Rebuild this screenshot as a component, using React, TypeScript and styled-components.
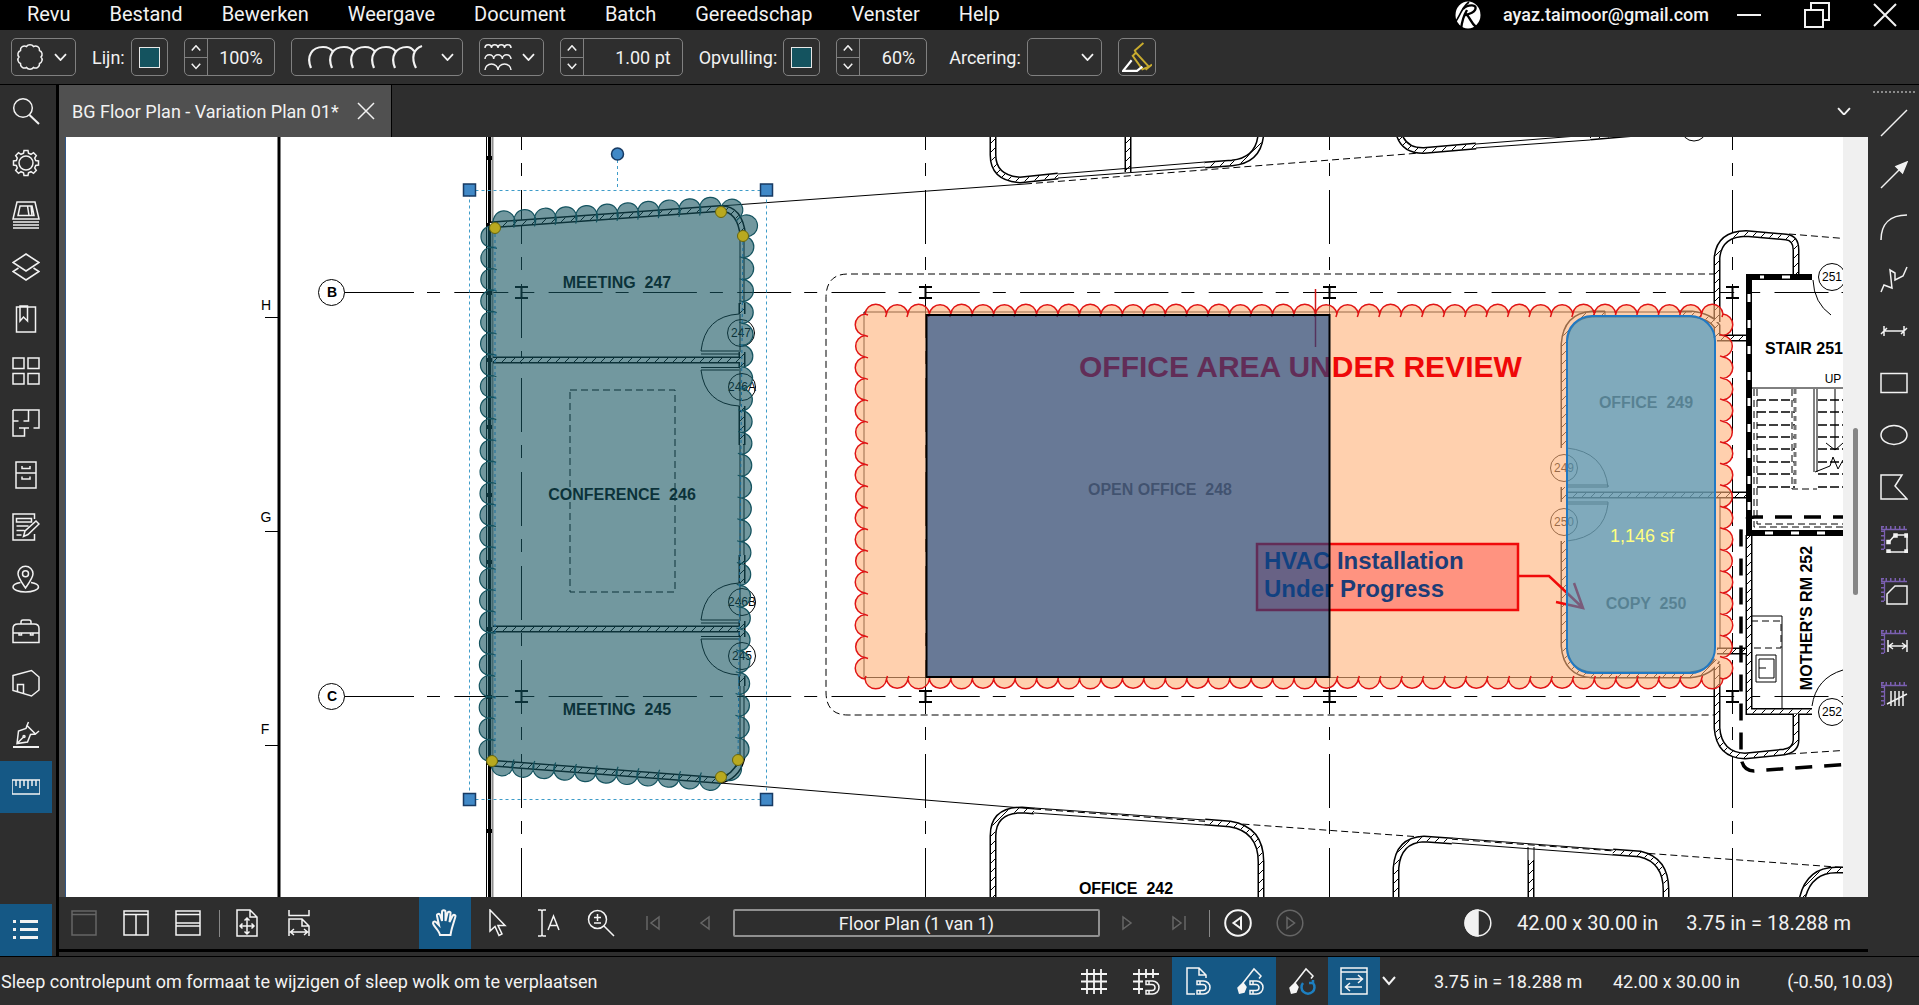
import React from "react";
import styled, { createGlobalStyle } from "styled-components";

const GlobalStyle = createGlobalStyle`
  * { box-sizing: border-box; }
  html, body { margin: 0; padding: 0; }
  body {
    background: #2e2e2e;
    color: #f2f2f2;
    font-family: Roboto, "Liberation Sans", sans-serif;
    font-size: 18px;
    overflow: hidden;
  }
  button, input, select { font: inherit; color: inherit; }
  button { background: none; border: 0; padding: 0; cursor: pointer; }
`;

/* ---------- shell ---------- */

const Shell = styled.div`
  display: flex;
  flex-direction: column;
  height: 100vh;
`;

const MenuBar = styled.header`
  display: flex;
  align-items: center;
  justify-content: space-between;
  height: 30px;
  flex: none;
  background: #000;
`;

const MenuList = styled.nav`
  display: flex;
  padding-left: 8px;
  height: 100%;
`;

const MenuItem = styled.button`
  padding: 0 20px 2px 19px;
  font-size: 20px;
  line-height: 28px;
  white-space: nowrap;
`;

const Account = styled.div`
  display: flex;
  align-items: center;
  height: 100%;
`;

const AccountName = styled.span`
  margin: 0 6px 0 22px;
  font-weight: 500;
  line-height: 28px;
`;

const WindowButton = styled.button`
  display: grid;
  place-items: center;
  width: 68px;
  height: 30px;
`;

const ToolBar = styled.div`
  display: flex;
  align-items: center;
  gap: 16px;
  flex: none;
  height: 55px;
  padding-left: 11px;
  border-bottom: 1px solid #000;
`;

const Field = styled.div<{ $lead?: number }>`
  display: flex;
  align-items: center;
  gap: 6px;
  margin-left: ${(p) => p.$lead ?? 0}px;
`;

const Label = styled.label`
  white-space: nowrap;
`;

const Boxed = styled.button<{ $w: number; $spread?: boolean }>`
  display: flex;
  align-items: center;
  justify-content: ${(p) => (p.$spread ? "space-between" : "center")};
  width: ${(p) => p.$w}px;
  height: 38px;
  padding: ${(p) => (p.$spread ? "0 8px 0 4px" : "0")};
  border: 1px solid #808080;
  border-radius: 5px;
`;

const Swatch = styled.span`
  width: 21px;
  height: 21px;
  background: #14535f;
  border: 1px solid #e8e8e8;
`;

const Spin = styled.div<{ $w: number }>`
  display: flex;
  width: ${(p) => p.$w}px;
  height: 38px;
  border: 1px solid #808080;
  border-radius: 5px;
  overflow: hidden;
`;

const SpinKeys = styled.div`
  display: grid;
  grid-template-rows: 1fr 1fr;
  width: 23px;
  flex: none;
  border-right: 1px solid #808080;

  button { display: grid; place-items: center; }
  button + button { border-top: 1px solid #808080; }
`;

const SpinInput = styled.input`
  flex: 1;
  min-width: 0;
  padding: 0 11px 0 0;
  border: 0;
  background: none;
  text-align: right;
`;

const SelectWrap = styled.div`
  display: grid;
  align-items: center;
  width: 75px;

  select, svg { grid-area: 1 / 1; }
  svg { justify-self: end; margin-right: 8px; pointer-events: none; }
`;

const Select = styled.select`
  width: 100%;
  height: 38px;
  appearance: none;
  background: none;
  border: 1px solid #808080;
  border-radius: 5px;
`;

const Body = styled.div`
  display: flex;
  flex: 1;
  min-height: 0;
`;

const Rail = styled.aside`
  display: flex;
  flex-direction: column;
  width: 59px;
  flex: none;
  border-right: 3px solid #000;
`;

const RailButton = styled.button<{ $on?: boolean; $end?: boolean }>`
  display: grid;
  place-items: center;
  width: 52px;
  height: 52px;
  margin-top: ${(p) => (p.$end ? "auto" : "0")};
  background: ${(p) => (p.$on ? "#155885" : "none")};
`;

const Center = styled.main`
  display: flex;
  flex-direction: column;
  flex: 1;
  min-width: 0;
`;

const TabRow = styled.div`
  display: flex;
  align-items: center;
  justify-content: space-between;
  flex: none;
  height: 52px;
  padding-right: 17px;
`;

const Tab = styled.div`
  display: flex;
  align-items: center;
  gap: 18px;
  height: 100%;
  padding: 0 16px 0 13px;
  background: #505050;
  border-right: 1px solid #000;
  white-space: nowrap;
`;

const IconButton = styled.button`
  display: grid;
  place-items: center;
`;

const Viewport = styled.section`
  display: flex;
  flex: 1;
  min-height: 0;
  border-left: 6px solid #505050;
  background: #fff;
`;

const Sheet = styled.div`
  flex: 1;
  min-width: 0;
  border-left: 1px solid #2f5688;
`;

const ScrollTrack = styled.div`
  display: flex;
  justify-content: center;
  flex: none;
  width: 25px;
  background: #f0f0f0;
`;

const ScrollThumb = styled.div`
  width: 5px;
  height: 22%;
  margin-top: 291px;
  border-radius: 3px;
  background: #868686;
`;

const NavBar = styled.div`
  display: flex;
  align-items: center;
  flex: none;
  height: 55px;
  border-bottom: 3px solid #000;
`;

const NavGroup = styled.div<{ $lead?: number }>`
  display: flex;
  align-items: center;
  height: 100%;
  margin-left: ${(p) => p.$lead ?? 0}px;
`;

const ToolButton = styled.button<{ $on?: boolean; $dim?: boolean }>`
  display: grid;
  place-items: center;
  width: 52px;
  height: 100%;
  flex: none;
  background: ${(p) => (p.$on ? "#155885" : "none")};
  color: ${(p) => (p.$dim ? "#666" : "#f5f5f5")};
`;

const Rule = styled.span`
  width: 1px;
  height: 27px;
  margin: 0 2px 0 4px;
  background: #888;
`;

const PageInput = styled.input`
  width: 367px;
  height: 28px;
  margin: 0 1px 0 2px;
  padding: 0;
  border: 2px solid #909090;
  border-radius: 2px;
  background: #2e2e2e;
  text-align: center;
`;

const NavInfo = styled.div`
  display: flex;
  align-items: center;
  gap: 28px;
  margin-left: auto;
  padding-right: 17px;
  font-size: 20px;
  white-space: nowrap;

  svg { margin-right: -3px; }
`;

const SideTools = styled.aside`
  display: flex;
  flex-direction: column;
  align-items: center;
  flex: none;
  width: 51px;
`;

const Grip = styled.span`
  width: 42px;
  height: 12px;
  background: repeating-linear-gradient(90deg, #8a8a8a 0 2px, transparent 2px 4px) 0 6px / 100% 2px no-repeat;
`;

const StatusBar = styled.footer`
  display: flex;
  align-items: center;
  justify-content: space-between;
  flex: none;
  height: 49px;
  border-top: 1px solid #000;
  white-space: nowrap;
`;

const StatusText = styled.span`
  padding-left: 1px;
`;

const StatusGroup = styled.div`
  display: flex;
  align-items: center;
  height: 100%;
`;

const Readouts = styled.div`
  display: flex;
  padding: 0 26px 0 36px;
`;

const Readout = styled.span<{ $w: number; $end?: boolean }>`
  width: ${(p) => p.$w}px;
  text-align: ${(p) => (p.$end ? "right" : "left")};
`;

const BodySpacer = styled.div`
  height: 4px;
  flex: none;
`;

/* ---------- icons ---------- */

const Glyph = styled.svg`
  display: block;
  fill: none;
  stroke: currentColor;
  stroke-width: 1.5;
`;

type IconProps = { size?: number; children: React.ReactNode };

const Icon = ({ size = 28, children }: IconProps) => (
  <Glyph width={size} height={size} viewBox="-1 -1 28 28" aria-hidden="true">
    {children}
  </Glyph>
);

const Chevron = ({ w = 13, up = false, bold = 1.8 }: { w?: number; up?: boolean; bold?: number }) => (
  <Glyph width={w} height={w * 0.62} viewBox="0 0 13 8" strokeWidth={bold} aria-hidden="true">
    <path d={up ? "M1 7 6.5 1 12 7" : "M1 1 6.5 7 12 1"} strokeWidth={bold} />
  </Glyph>
);

const railIcons: { name: string; art: React.ReactNode }[] = [
  { name: "Zoeken", art: <><circle cx="10" cy="10" r="9.3" /><path d="M16.5 17 26 26" strokeWidth="2" /></> },
  {
    name: "Eigenschappen",
    art: (
      <>
        <circle cx="13" cy="13" r="7" />
        <path d="M10.5 3.3 11 .5h4l.5 2.8 2.500 1L20.5 2.7l2.800 2.800L21.700 8l1 2.500 2.800.5v4l-2.800.5-1 2.500 1.600 2.500-2.800 2.800-2.500-1.600-2.500 1-.5 2.800h-4l-.5-2.800-2.500-1-2.500 1.600L2.700 20.500 4.300 18l-1-2.500L.5 15v-4l2.800-.5 1-2.500L2.700 5.500 5.500 2.700 8 4.300z" />
      </>
    ),
  },
  {
    name: "Sets",
    art: <path d="M4 0h18l4 17H0zM7 4h12l2 9.500H5zM14.500 4l1.500 9.500M18 4l1 9.500M0 20h26M0 23h26M0 26h26" />,
  },
  { name: "Lagen", art: <path d="M13 0 26 8.500 13 17 0 8.500zM5.500 14 0 17.500 13 26l13-8.500-5.500-3.500" /> },
  { name: "Bladwijzers", art: <path d="M3.500 1h19v25h-19zM7 0v15l3.500-4 4 4V0z" /> },
  { name: "Miniaturen", art: <path d="M0 0h11v10.500H0zM15 0h11v10.500H15zM0 15.500h11V26H0zM15 15.500h11V26H15z" /> },
  {
    name: "Ruimten",
    art: <path d="M0 0h15.500v11h-5M5.500 11H0V0M15.500 0H26v18h-5.500M0 11v15h11.500v-8M6 18h10" />,
  },
  { name: "Bestandstoegang", art: <path d="M3 0h20v26H3zM3 11h20M9 4v2.500h8V4M9 14.500V17h8v-2.500" /> },
  {
    name: "Formulieren",
    art: <path d="M21.500 5V0H0v26h21.500v-6M3.500 4.500h15V8h-15zM3.500 12h12M3.500 16.500h8M3.500 21h5M10.500 22.500l1.500-5.500L23 7l3 3-11 10.500z" />,
  },
  {
    name: "Locaties",
    art: <><path d="M12.500 22C8 15.500 5 11.500 5 7.800a7.500 7.500 0 0 1 15 0c0 3.700-3 7.700-7.500 14.200z" /><circle cx="12.500" cy="7.800" r="3" /><path d="M7.500 16.500C3 17.300 0 18.800 0 21c0 2.800 5.500 5 12.500 5S25.500 23.800 25.500 21c0-2.200-3-3.700-7.500-4.500" /></>,
  },
  { name: "Gereedschapskist", art: <path d="M0 24.500V10.500Q0 6 5 6h16q5 0 5 4.500v14zM8 6v-2q0-2 2-2h6q2 0 2 2v2M0 15h26M6 15v2h2.500v-2M17.500 15v2H20v-2" /> },
  { name: "Modelstructuur", art: <path d="M0 5.500 18.500.5 26 7v13l-7.500 6L0 20.500zM4.500 21.500v-7h6v8.500" /> },
  {
    name: "Handtekeningen",
    art: <><path d="M15.500 0 14 3.500l8.500 8.500 3.500-3M14 3.500 13 6.500 5.500 9 4 21.500l10.500-1.500 3-7.500 5-.5M4 21.500l6-6" /><circle cx="11" cy="14.500" r="1" /><path d="M0 25h26" strokeWidth="2" /></>,
  },
  { name: "Metingen", art: <path d="M-1 6h28v14H-1zM3 6v6M7 6v8M11 6v6M15 6v9M19 6v6M23 6v6" /> },
];

const measureFrame = (
  <>
    <path d="M0 1.500H26M1.500 0V26" stroke="#7a5fb0" strokeWidth="3" strokeDasharray="1.5 3" />
    <path d="M0 3.500H26M3.500 3V23" stroke="#7a5fb0" strokeWidth="1.3" />
  </>
);

const sideIcons: { name: string; art: React.ReactNode }[] = [
  { name: "Lijn", art: <path d="M0 26 26 0" /> },
  { name: "Pijl", art: <><path d="M0 26 20 6" /><path d="M26 0 21.500 11 15 4.500z" fill="currentColor" /></> },
  { name: "Boog", art: <path d="M0 26C0 10 9 1 26 1" /> },
  { name: "Polylijn", art: <path d="M0 26 3 19 11 22 9 4 14 7 14 14 22 10 26 1" /> },
  { name: "Maatlijn", art: <path d="M3 13h20M3 8v10M23 8v10M0 16l6-6M20 16l6-6" /> },
  { name: "Rechthoek", art: <path d="M0 3.500h26v19H0z" /> },
  { name: "Ellips", art: <ellipse cx="13" cy="13" rx="13" ry="9.5" /> },
  { name: "Veelhoek", art: <path d="M0 1h21L14 12l12 13H0z" /> },
  {
    name: "Oppervlakte volgen",
    art: <>{measureFrame}<path d="M8 26h18V9H14l-6 7" /><path d="M6 14.500h3v3H6zM13 8h3v3h-3zM24 8h3v3h-3zM24 24h3v3h-3zM6 24h3v3H6z" fill="currentColor" /></>,
  },
  { name: "Oppervlakte", art: <>{measureFrame}<path d="M6 26V16l8-8h12v18z" /></> },
  { name: "Lengte", art: <>{measureFrame}<path d="M7 10v12M26 10v12M8 16h17M12 13l-4 3 4 3M21 13l4 3-4 3" /></> },
  { name: "Tellen", art: <>{measureFrame}<path d="M10 9v15M14 9v15M18 9v15M22 9v15M6 22 26 12" /></> },
];

const Magnet = ({ x, y }: { x: number; y: number }) => (
  <g transform={`translate(${x} ${y})`}>
    <path d="M0 0h6.500a6.500 6.500 0 0 1 0 13H0V9.500h6a3 3 0 0 0 0-6H0zM3 0v3.500M3 9.500V13" />
  </g>
);

const Pen = () => (
  <>
    <path d="M6 15 17 1l7 7-2 2.500" />
    <path d="m6 15-5 5 1.500 5 4.500-1 2-5z" fill="currentColor" />
  </>
);

const Stroke = ({ w, h, box, d, sw = 1.5 }: { w: number; h: number; box: string; d: string; sw?: number }) => (
  <Glyph width={w} height={h} viewBox={box} aria-hidden="true">
    <path d={d} strokeWidth={sw} />
  </Glyph>
);

/* ---------- drawing ---------- */

type Pt = [number, number];

/* Revision-cloud outline: bulges outward along a clockwise polygon,
   each bulge ending in a short hook that points inward. */
const cloudPath = (pts: Pt[], step: number, r: number, full: 0 | 1) => {
  let d = `M${pts[0][0]} ${pts[0][1]}`;
  pts.forEach((a, i) => {
    const b = pts[(i + 1) % pts.length];
    const len = Math.hypot(b[0] - a[0], b[1] - a[1]);
    const n = Math.max(1, Math.round(len / step));
    const ux = (b[0] - a[0]) / len;
    const uy = (b[1] - a[1]) / len;
    const hx = (-uy * 3 - ux).toFixed(1);
    const hy = (ux * 3 - uy).toFixed(1);
    for (let k = 1; k <= n; k++) {
      const x = (a[0] + ((b[0] - a[0]) * k) / n).toFixed(1);
      const y = (a[1] + ((b[1] - a[1]) * k) / n).toFixed(1);
      d += `A${r} ${r} 0 ${full} 1 ${x} ${y}l${hx} ${hy}L${x} ${y}`;
    }
  });
  return d + "Z";
};

const walls = [
  "M490 225 720 208.500Q740 208 743 236",
  "M493 360H742",
  "M493 629H742",
  "M490 763 720 780.500Q738 776 742 757",
  "M742 303V314M742 352V368M742 406V445M742 555V583M742 621V637M742 676V686",
  "M993 130V155Q993 178 1020 180L1058 176M1205 165 1232 163Q1261 160 1261 130",
  "M1128 130V172",
  "M1398 130Q1402 151 1424 150.500L1476 146M1590 137 1660 131",
  "M993 905V836Q993 810 1022 810L1034 811M1205 822 1230 824Q1261 829 1261 862V905",
  "M1396 905V868Q1398 840 1424 839L1452 841M1613 852 1640 854Q1666 860 1666 890V905",
  "M1531 860V905",
  "M1801 905Q1806 870 1836 870H1850",
  "M1717 322V258Q1719 234 1746 233.500L1786 237Q1796 238 1796 250V276",
  "M1717 338H1746M1564 495H1746M1717 651H1746",
  "M1717 664V728Q1719 755 1745 756L1784 752Q1796 750 1796 740V714",
  "M1749 535V711.500H1812",
  "M1564 448V344Q1566 316 1592 314H1605M1678 314H1692Q1710 316 1717 326V338",
  "M1564 487V502M1564 541V646Q1566 673 1592 675H1690Q1710 673 1717 660",
].join("");

const thin = [
  "M720 206 1025 184M720 783 1034 809",
  "M701 351H739M701 354H739M701 351Q705 316 739 314M701 367.500H739M701 370H739M701 370Q705 404 739 406",
  "M701 620H739M701 623H739M701 620Q705 585 739 583M701 636.500H739M701 639H739M701 639Q705 673 739 675",
  "M740 239V303M744 239V303M740 314V352M740 368V406M740 445V555M744 445V555M740 583V621M740 637V676M740 686V757M744 686V757",
  "M864 312H1692M864 677.500H1592M864 312V677.500M1605 317H1678M1605 311V317",
  "M1567 448Q1604 452 1608 487M1567 487H1608V485H1567M1567 502H1608V504H1567M1567 541Q1604 537 1608 504",
  "M1720 497V648",
  "M1034 808 1205 820M1034 813 1205 825M1452 838 1613 850M1452 843 1613 855M1058 178 1205 167M1058 174 1205 162M1476 148 1590 140M1476 144 1590 135M1528 847V860M1534 847V860",
  "M1813 280Q1814 303 1831 315M1812 706Q1816 678 1843 670",
  "M1751 388H1843M1814 389V472M1817 389V472M1815 472 1830 466 1833 457 1838 469 1843 460M1835 389V450M1826 443 1835 450 1843 443",
  "M1751 616H1782V708M1756 655H1776V682H1756ZM1759 659H1774V678H1759ZM1759 668H1766",
].join("");

const dashed = [
  "M1025 184 1420 153M1034 809 1850 868M1789 234 1850 239M1789 754 1850 750",
  "M1716 274H848Q826 274 826 298V692Q826 715 848 715H1716",
  "M570 390H675V592H570Z",
  "M1754 389V527H1843M1757 389V524H1843M1792 389V489H1817M1751 621H1781V648H1751",
].join("");

const treads = [400, 412, 425, 437, 449, 462, 474, 487];
const axes = [521, 925, 1329, 1732];
const knots = [158, 225, 293, 360, 427, 495, 562, 629, 697, 763, 831];

const rooms: { x: number; y: number; t: string }[] = [
  { x: 617, y: 288, t: "MEETING  247" },
  { x: 622, y: 500, t: "CONFERENCE  246" },
  { x: 617, y: 715, t: "MEETING  245" },
  { x: 1160, y: 495, t: "OPEN OFFICE  248" },
  { x: 1646, y: 408, t: "OFFICE  249" },
  { x: 1646, y: 609, t: "COPY  250" },
  { x: 1126, y: 894, t: "OFFICE  242" },
];

const tags: { x: number; y: number; t: string }[] = [
  { x: 741, y: 333, t: "247" },
  { x: 742, y: 387, t: "246A" },
  { x: 742, y: 602, t: "246B" },
  { x: 742, y: 656, t: "245" },
  { x: 1564, y: 468, t: "249" },
  { x: 1564, y: 522, t: "250" },
  { x: 1832, y: 277, t: "251" },
  { x: 1832, y: 712, t: "252" },
];

const teal: Pt[] = [[494, 226], [721, 211], [738, 219], [743, 236], [738, 760], [721, 777], [492, 761]];
const review: Pt[] = [[865, 314], [1723, 314], [1723, 679], [865, 679]];

const Drawing = styled.svg`
  display: block;
  width: 100%;
  height: 100%;
  font-family: "Liberation Sans", sans-serif;
`;

const RoomName = styled.text`
  font-weight: 700;
  font-size: 16px;
  text-anchor: middle;
  white-space: pre;
`;

const TagText = styled.text`
  font-size: 12px;
  text-anchor: middle;
`;

const AxisText = styled.text<{ $bold?: boolean }>`
  font-weight: ${(p) => (p.$bold ? 700 : 400)};
  font-size: 14px;
  text-anchor: middle;
`;

const MarkupText = styled.text<{ $size: number; $bold?: boolean }>`
  font-size: ${(p) => p.$size}px;
  font-weight: ${(p) => (p.$bold ? 700 : 400)};
`;

const FloorPlan = () => (
  <Drawing viewBox="66 137 1777 760" preserveAspectRatio="xMinYMin slice" role="img" aria-label="Floor Plan">
    <defs>
      <pattern id="hatch" width="9" height="9" patternUnits="userSpaceOnUse">
        <path d="M-1 10 10 -1" stroke="#000" strokeWidth="1" />
      </pattern>
    </defs>
    <path d="M279 130V905" stroke="#000" strokeWidth="3" />
    <path d="M265 317.500H278M265 531.500H278M265 745.500H278" stroke="#000" />
    <AxisText x="266" y="310">H</AxisText>
    <AxisText x="266" y="522">G</AxisText>
    <AxisText x="265" y="734">F</AxisText>

    <g fill="none" stroke="#000">
      <path d="M344 292.500H360M344 696.500H360" />
      <path d="M360 292.500H1850M360 696.500H1850" strokeDasharray="54 13 13 14.3" />
      {axes.map((x) => (
        <g key={x}>
          <path d={`M${x}.5 96V905`} strokeDasharray="54 13 13 14" />
          <path d={`M${x - 6} 287H${x + 7}M${x - 6} 298H${x + 7}M${x}.5 287V298M${x - 6} 691H${x + 7}M${x - 6} 702H${x + 7}M${x}.5 691V702`} strokeWidth="2" />
        </g>
      ))}
      <path d="M486.500 130V905" />
      <path d="M489.500 130V905" strokeWidth="3" />
      <path d="M492.500 130V905" stroke="#8f8f8f" strokeWidth="2" />
      {knots.map((y) => (
        <path key={y} d={`M487 ${y}H492`} strokeWidth="4" />
      ))}
    </g>
    <g fill="#fff" stroke="#000">
      <circle cx="331.5" cy="292.5" r="13" />
      <circle cx="331.5" cy="696.5" r="13" />
      <circle cx="1694" cy="128" r="13" />
    </g>
    <AxisText $bold x="332" y="297">B</AxisText>
    <AxisText $bold x="332" y="701">C</AxisText>

    <g fill="none">
      <path d={dashed} stroke="#000" strokeDasharray="7 4" />
      <path d={walls} stroke="#000" strokeWidth="7" />
      <path d={walls} stroke="#fff" strokeWidth="4" />
      <path d={walls} stroke="url(#hatch)" strokeWidth="4" />
      <path d={thin} stroke="#000" />
      {treads.map((y) => (
        <path key={y} d={`M1757 ${y}H1795M1818 ${y}H1843`} stroke="#000" strokeWidth="1.5" strokeDasharray="9 3" />
      ))}
      <path d="M1795 389V487" stroke="#777" strokeWidth="3" strokeDasharray="5 4" />
      <path d="M1812 277H1749V533H1843" stroke="#000" strokeWidth="6" />
      <path d="M1790 277H1760M1749 294V520M1765 533H1843" stroke="#fff" strokeWidth="3" strokeDasharray="8 18" />
      <path d="M1850 517H1755Q1741 517 1741 532V756Q1742 771 1754 771L1850 764" stroke="#000" strokeWidth="3.5" strokeDasharray="17 12" />
    </g>

    {rooms.map((r) => (
      <RoomName key={r.t} x={r.x} y={r.y}>{r.t}</RoomName>
    ))}
    <RoomName x="1804" y="354">STAIR 251</RoomName>
    <RoomName transform="translate(1812 618) rotate(-90)">MOTHER'S RM 252</RoomName>
    <TagText x="1833" y="383">UP</TagText>
    {tags.map((t) => (
      <g key={t.t}>
        <circle cx={t.x} cy={t.y} r="13.5" fill={t.x > 1800 ? "#fff" : "none"} stroke="#000" />
        <TagText x={t.x} y={t.y + 4}>{t.t}</TagText>
      </g>
    ))}

    <path d={cloudPath(review, 21.5, 10.8, 0)} fill="#ffb178" fillOpacity="0.6" stroke="#e01515" strokeWidth="1.5" />
    <path d="M1315.500 289V347" stroke="#d01818" strokeWidth="1.5" />
    <MarkupText $size={30} $bold x="1079" y="377" fill="#ef0808">OFFICE AREA UNDER REVIEW</MarkupText>
    <rect x="1257" y="544" width="261" height="66" fill="#ff6a60" fillOpacity="0.6" stroke="#f00a0a" strokeWidth="2.5" />
    <MarkupText $size={24} $bold x="1264" y="569" fill="#1c3d77">HVAC Installation</MarkupText>
    <MarkupText $size={24} $bold x="1264" y="597" fill="#1c3d77">Under Progress</MarkupText>
    <path d="M1518 576H1549L1583 608M1574 583 1583 608 1556 602" fill="none" stroke="#f00a0a" strokeWidth="2.5" />
    <rect x="926.5" y="315" width="403" height="362" fill="#0b4488" fillOpacity="0.62" stroke="#000" strokeWidth="2" />
    <rect x="1567" y="316" width="148" height="357" rx="25" fill="#2b91c4" fillOpacity="0.6" stroke="#2079c4" strokeWidth="2" />
    <MarkupText $size={18} x="1610" y="542" fill="#ffff80">1,146 sf</MarkupText>

    <path d={cloudPath(teal, 21.5, 10.9, 1)} fill="#14535f" fillOpacity="0.6" stroke="#14535f" strokeWidth="1.2" />
    <g fill="none" stroke="#3f9cc9" strokeDasharray="3 3">
      <path d="M469.500 190.500H766.500V799.500H469.500ZM617.500 160V190" />
      <path d="M495 228V761M743 236 738 760" stroke="#1a6f9c" />
    </g>
    <g fill="#4189c7" stroke="#173a63" strokeWidth="1.5">
      <circle cx="617.5" cy="154" r="6" />
      {[469.5, 766.5].map((x) => [190, 799.5].map((y) => <rect key={`${x}-${y}`} x={x - 6} y={y - 6} width="12" height="12" />))}
    </g>
    <g fill="#b9a91f" stroke="#67650f">
      {[[495, 228], [721, 212], [743, 236], [738, 760], [721, 777], [492, 761]].map(([x, y]) => (
        <circle key={`${x}-${y}`} cx={x} cy={y} r="5.5" />
      ))}
    </g>
  </Drawing>
);

/* ---------- page ---------- */

const menus = ["Revu", "Bestand", "Bewerken", "Weergave", "Document", "Batch", "Gereedschap", "Venster", "Help"];

const Spinner = ({ id, value, w, label }: { id: string; value: string; w: number; label: string }) => (
  <Spin $w={w}>
    <SpinKeys>
      <button aria-label={`${label} omhoog`}><Chevron w={10} up bold={2} /></button>
      <button aria-label={`${label} omlaag`}><Chevron w={10} bold={2} /></button>
    </SpinKeys>
    <SpinInput id={id} aria-label={label} defaultValue={value} />
  </Spin>
);

export default function App() {
  return (
    <Shell>
      <GlobalStyle />
      <MenuBar>
        <MenuList>
          {menus.map((m) => (
            <MenuItem key={m}>{m}</MenuItem>
          ))}
        </MenuList>
        <Account>
          <svg width="26" height="28" viewBox="0 0 26 28" aria-hidden="true">
            <ellipse cx="13" cy="14" rx="12.5" ry="13.5" fill="#fff" />
            <path d="M-1 22C4 19 5 8 14 1" fill="none" stroke="#000" strokeWidth="1.6" />
            <path d="M8 8c5-5 15-5 12 1-1.500 3-5 4-10 5M12 14c3 3 4 8 9 12M12 9C9 14 7 20 6 28" fill="none" stroke="#000" strokeWidth="2.4" />
          </svg>
          <AccountName>ayaz.taimoor@gmail.com</AccountName>
          <WindowButton aria-label="Minimaliseren"><Stroke w={24} h={4} box="0 0 24 4" d="M0 2H24" sw={2} /></WindowButton>
          <WindowButton aria-label="Vorig formaat"><Stroke w={26} h={26} box="0 0 26 26" d="M1 8H19V25H1ZM7 8V1H25V18H19" sw={2} /></WindowButton>
          <WindowButton aria-label="Sluiten"><Stroke w={24} h={24} box="0 0 24 24" d="M1 1 23 23M23 1 1 23" sw={2} /></WindowButton>
        </Account>
      </MenuBar>

      <ToolBar>
        <Boxed $w={65} $spread aria-label="Wolk">
          <Icon>
            <path d="M9.500 2.500a4 3.500 0 0 1 7 0 4 4 0 0 1 6 4 4 4 0 0 1 1.500 6.500 4 4 0 0 1-1.500 6.500 4 4 0 0 1-6 4 4 3.500 0 0 1-7 0 4 4 0 0 1-6-4A4 4 0 0 1 2 13a4 4 0 0 1 1.500-6.500 4 4 0 0 1 6-4z" />
          </Icon>
          <Chevron />
        </Boxed>
        <Field>
          <Label htmlFor="line-color">Lijn:</Label>
          <Boxed id="line-color" $w={37}><Swatch /></Boxed>
        </Field>
        <Spinner id="line-opacity" label="Dekking lijn" value="100%" w={91} />
        <Boxed $w={172} $spread aria-label="Lijnstijl">
          <Stroke w={132} h={26} box="2 0 132 26" sw={2.2} d="M17 24C12 12 18 3 29 3Q36 3 39 8M38 24C33 12 39 3 50 3Q57 3 60 8M59 24C54 12 60 3 71 3Q78 3 81 8M80 24C75 12 81 3 92 3Q99 3 102 8M101 24C96 12 102 3 113 3Q117 3 120 7M122 24C117 14 119 5 128 2" />
          <Chevron />
        </Boxed>
        <Boxed $w={65} $spread aria-label="Wolkgrootte">
          <Icon>
            <path d="M0 4a3.250 3.250 0 0 1 6.500 0 3.250 3.250 0 0 1 6.500 0 3.250 3.250 0 0 1 6.500 0A3.250 3.250 0 0 1 26 4M0 15a4.300 4.300 0 0 1 8.700 0 4.300 4.300 0 0 1 8.600 0 4.300 4.300 0 0 1 8.700 0M0 26a6.500 6 0 0 1 13 0 6.500 6 0 0 1 13 0" />
          </Icon>
          <Chevron />
        </Boxed>
        <Spinner id="line-width" label="Lijndikte" value="1.00 pt" w={123} />
        <Field>
          <Label htmlFor="fill-color">Opvulling:</Label>
          <Boxed id="fill-color" $w={37}><Swatch /></Boxed>
        </Field>
        <Spinner id="fill-opacity" label="Dekking opvulling" value="60%" w={91} />
        <Field $lead={6}>
          <Label htmlFor="hatching">Arcering:</Label>
          <SelectWrap>
            <Select id="hatching"><option value="" /></Select>
            <Chevron />
          </SelectWrap>
        </Field>
        <Boxed $w={38} aria-label="Markeerstift">
          <Icon size={30}>
            <path d="M19 0 11 7l1 2 12 13-6 2.500L9 12l3-3M21 25l6-5" stroke="#c9ac2e" strokeWidth="1.8" />
            <path d="M8 16 0 26h13l5-4" stroke="#fff" strokeWidth="2" />
          </Icon>
        </Boxed>
      </ToolBar>

      <Body>
        <Rail>
          {railIcons.map((r, i) => (
            <RailButton key={r.name} aria-label={r.name} $on={i === railIcons.length - 1}>
              <Icon>{r.art}</Icon>
            </RailButton>
          ))}
          <RailButton $end $on aria-label="Lijst met markeringen">
            <Stroke w={28} h={22} box="0 0 28 22" sw={3} d="M1 2.500H4M8 2.500H26M1 10.500H4M8 10.500H26M1 18.500H4M8 18.500H26" />
          </RailButton>
        </Rail>

        <Center>
          <TabRow>
            <Tab>
              <span>BG Floor Plan - Variation Plan 01*</span>
              <IconButton aria-label="Tabblad sluiten"><Stroke w={18} h={18} box="0 0 18 18" d="M1 1 17 17M17 1 1 17" /></IconButton>
            </Tab>
            <IconButton aria-label="Tabbladen"><Chevron w={14} /></IconButton>
          </TabRow>

          <Viewport>
            <Sheet><FloorPlan /></Sheet>
            <ScrollTrack><ScrollThumb /></ScrollTrack>
          </Viewport>

          <NavBar>
            <NavGroup>
              <ToolButton $dim aria-label="Niet splitsen"><Icon><path d="M0 1h24v24H0zM0 4.500h24" /></Icon></ToolButton>
              <ToolButton aria-label="Verticaal splitsen"><Icon><path d="M0 1h24v24H0zM0 4.500h24M12 4.500V25" /></Icon></ToolButton>
              <ToolButton aria-label="Horizontaal splitsen"><Icon><path d="M0 1h24v24H0zM0 4.500h24M0 13h24M0 16h24" /></Icon></ToolButton>
              <Rule />
              <ToolButton aria-label="Pagina passend">
                <Icon><path d="M2 0h13l7 7v19H2zM15 0v7h7M12 8v16M5 16h14M9.500 10.500 12 8l2.500 2.500M9.500 21.500 12 24l2.500-2.500M7.500 13.500 5 16l2.500 2.500M16.500 13.500 19 16l-2.500 2.500" /></Icon>
              </ToolButton>
              <ToolButton aria-label="Breedte passend">
                <Icon><path d="M2 0v5.500h20V0M2 26V9h13l7 7v10M15 9v7h7M3 22h18M7 19l-3.500 3L7 25M17 19l3.500 3-3.500 3" /></Icon>
              </ToolButton>
            </NavGroup>
            <NavGroup $lead={93}>
              <ToolButton $on aria-label="Pannen">
                <Icon>
                  <path strokeWidth="2" d="M8 25C7 20 1 16 1 13c0-2 2.500-2 3.500-.5L7 15 5 6c-.4-2.200 2.500-3 3.200-.8L10 11V2c0-2.500 3.500-2.500 3.500 0v9L15.500 3c.6-2.200 3.500-1.500 3 .8L17.500 12l3-6c1-2 3.500-1 2.800 1L20 18c-.6 2-1 4-1.500 7z" />
                </Icon>
              </ToolButton>
              <ToolButton aria-label="Selecteren"><Icon><path d="M6 0v21l5-4.500 4 9 3-1.500-4-8.500h7z" /></Icon></ToolButton>
              <ToolButton aria-label="Tekst selecteren"><Icon><path d="M2 0h3l1 1 1-1h3M6 1v24M2 26h3l1-1 1 1h3M12 20l5.500-14L23 20M14 15.500h7" /></Icon></ToolButton>
              <ToolButton aria-label="Zoomen"><Icon><circle cx="9.5" cy="9.5" r="9" /><path d="M16 16l10 10M6 7.500h7M9.500 4v7M6 13h7" /></Icon></ToolButton>
              <ToolButton $dim aria-label="Eerste pagina"><Icon><path d="M7 6v14M19 7v12l-8-6z" /></Icon></ToolButton>
              <ToolButton $dim aria-label="Vorige pagina"><Icon><path d="M17 7v12l-8-6z" /></Icon></ToolButton>
              <PageInput aria-label="Pagina" defaultValue="Floor Plan (1 van 1)" />
              <ToolButton $dim aria-label="Volgende pagina"><Icon><path d="M9 7v12l8-6z" /></Icon></ToolButton>
              <ToolButton $dim aria-label="Laatste pagina"><Icon><path d="M19 6v14M7 7v12l8-6z" /></Icon></ToolButton>
              <Rule />
              <ToolButton aria-label="Vorige weergave"><Icon><circle cx="13" cy="13" r="12.8" strokeWidth="2" /><path d="M16 7.500v11L8.500 13z" strokeWidth="2" /></Icon></ToolButton>
              <ToolButton $dim aria-label="Volgende weergave"><Icon><circle cx="13" cy="13" r="12.8" /><path d="M10 7.500v11l7.500-5.500z" /></Icon></ToolButton>
            </NavGroup>
            <NavInfo>
              <Icon><circle cx="13" cy="13" r="12.8" /><path d="M13 0a13 13 0 0 0 0 26z" fill="currentColor" /></Icon>
              <span>42.00 x 30.00 in</span>
              <span>3.75 in = 18.288 m</span>
            </NavInfo>
          </NavBar>
          <BodySpacer />
        </Center>

        <SideTools>
          <Grip />
          {sideIcons.map((s) => (
            <RailButton key={s.name} aria-label={s.name}><Icon>{s.art}</Icon></RailButton>
          ))}
        </SideTools>
      </Body>

      <StatusBar>
        <StatusText>Sleep controlepunt om formaat te wijzigen of sleep wolk om te verplaatsen</StatusText>
        <StatusGroup>
          <ToolButton aria-label="Raster"><Icon><path strokeWidth="1.8" d="M6 1v25M13 1v25M20 1v25M0 6h26M0 13.500h26M0 21h26" /></Icon></ToolButton>
          <ToolButton aria-label="Uitlijnen op raster"><Icon><path strokeWidth="1.8" d="M6 1v25M13 1v9M20 1v9M0 6h26M0 13.500h10M0 21h10" /><Magnet x={13} y={13} /></Icon></ToolButton>
          <ToolButton $on aria-label="Uitlijnen op inhoud"><Icon><path d="M10 26H2V0h12l7 7v3M14 0v7h7" /><Magnet x={12} y={13} /></Icon></ToolButton>
          <ToolButton $on aria-label="Uitlijnen op markeringen"><Icon><Pen /><Magnet x={13} y={13} /></Icon></ToolButton>
          <ToolButton aria-label="Opnieuw gebruiken"><Icon><Pen /><path d="M14 15a6.500 6.500 0 1 0 10 0l0-3M20 15h4.500" stroke="#1d7fc0" strokeWidth="2.5" /></Icon></ToolButton>
          <ToolButton $on aria-label="Synchroniseren"><Icon><path d="M0 0h26v26H0zM0 4h26M5 11h16M17 7l4.500 4-4.500 4M21 19H5M9 15l-4.500 4L9 23" /></Icon></ToolButton>
          <IconButton aria-label="Synchronisatieopties"><Stroke w={18} h={10} box="-2 0 18 10" d="M1 1 7 8 13 1" sw={2} /></IconButton>
          <Readouts>
            <Readout $w={179}>3.75 in = 18.288 m</Readout>
            <Readout $w={150}>42.00 x 30.00 in</Readout>
            <Readout $w={130} $end>(-0.50, 10.03)</Readout>
          </Readouts>
        </StatusGroup>
      </StatusBar>
    </Shell>
  );
}
